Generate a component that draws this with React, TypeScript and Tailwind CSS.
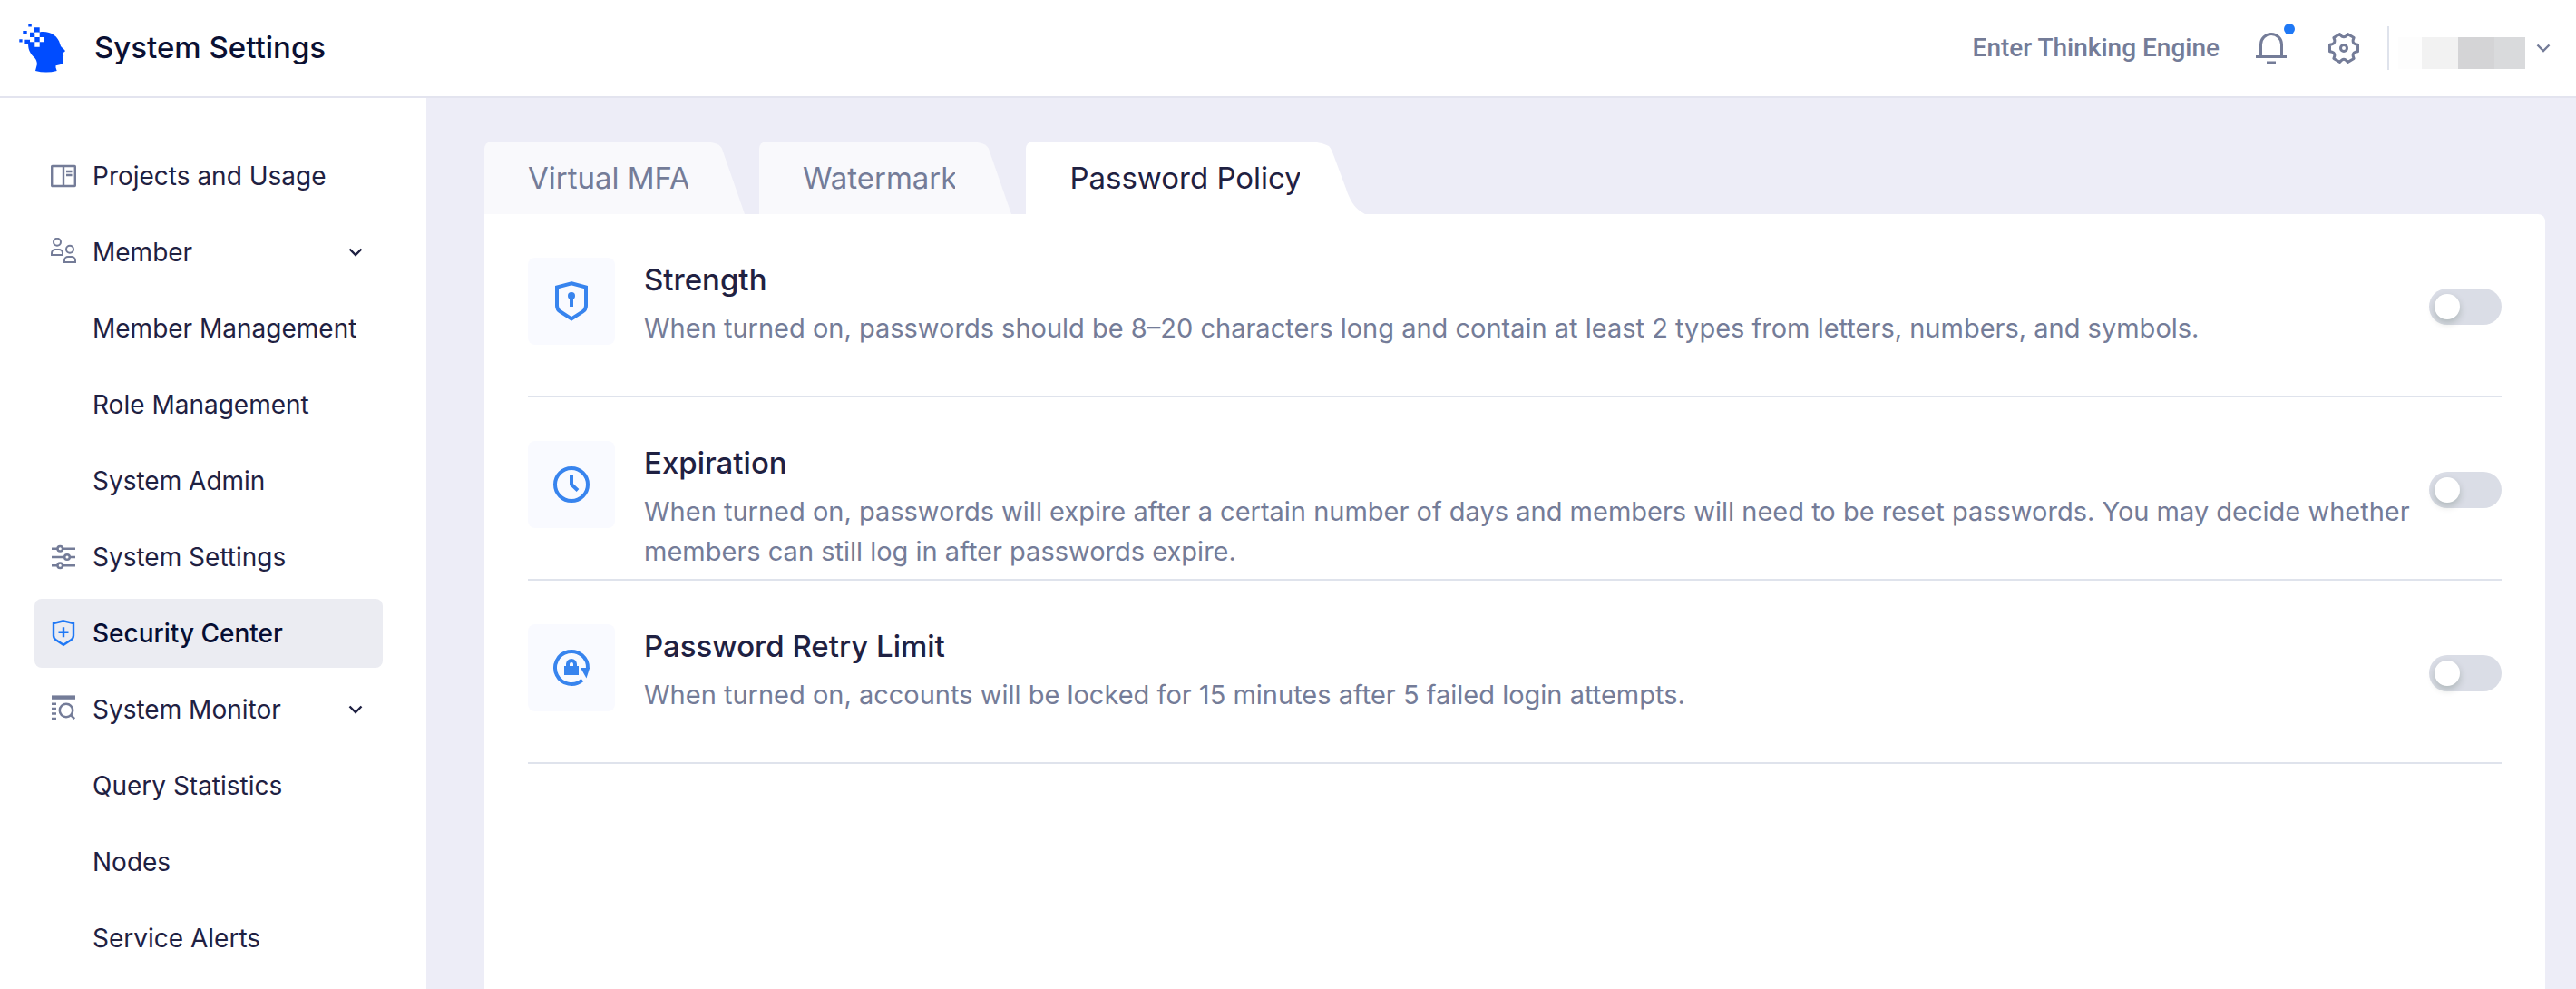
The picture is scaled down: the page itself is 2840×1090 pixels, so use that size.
import { useId, useState } from "react";
import type { ReactNode } from "react";

function NavIcon({ children, className }: { children: ReactNode; className: string }) {
  return (
    <svg viewBox="0 0 28 32" className={`h-8 w-7 shrink-0 ${className}`} fill="none" stroke="currentColor" strokeWidth="2" aria-hidden="true">
      {children}
    </svg>
  );
}

const projectsIcon = (
  <>
    <rect x="1.2" y="5" width="25.6" height="22" rx="0.5" strokeWidth="2.4" />
    <path d="M14 5v22M17 11h6.5M17 15h6.5" strokeWidth="2.4" />
  </>
);

const memberIcon = (
  <>
    <circle cx="7" cy="4.8" r="4" />
    <path d="M1 19v-2a4 4 0 0 1 4-4h4a4 4 0 0 1 4 4v2z" />
    <circle cx="21" cy="12.8" r="4" />
    <path d="M15 27v-2a4 4 0 0 1 4-4h4a4 4 0 0 1 4 4v2z" />
  </>
);

const slidersIcon = (
  <g strokeWidth="2.5">
    <path d="M1 6.7h6.5M13.5 6.7H27M1 16h14M21 16h6M1 25.3h6.5M13.5 25.3H27" />
    <circle cx="10.3" cy="6.7" r="2.8" />
    <circle cx="18" cy="16" r="2.8" />
    <circle cx="10.3" cy="25.3" r="2.8" />
  </g>
);

const shieldPlusIcon = (
  <g strokeWidth="2.4">
    <path d="M14 2.3 25 5V18.5Q25 21.5 22 23.6L14 28.8 6 23.6Q3 21.5 3 18.5V5z" />
    <path d="M14 9.3v11M8.5 14.8h11" />
  </g>
);

const monitorIcon = (
  <g strokeWidth="2.5">
    <path d="M1 2.6h26" strokeWidth="4.4" />
    <path d="M1 9.7h5M1 15h5M1 20.5h5M1 26h5" />
    <circle cx="17" cy="17" r="7.2" />
    <path d="m22 22 4.2 4.2" />
  </g>
);

type NavItem = { label: string; icon?: ReactNode; expandable?: boolean; active?: boolean };

const navItems: NavItem[] = [
  { label: "Projects and Usage", icon: projectsIcon },
  { label: "Member", icon: memberIcon, expandable: true },
  { label: "Member Management" },
  { label: "Role Management" },
  { label: "System Admin" },
  { label: "System Settings", icon: slidersIcon },
  { label: "Security Center", icon: shieldPlusIcon, active: true },
  { label: "System Monitor", icon: monitorIcon, expandable: true },
  { label: "Query Statistics" },
  { label: "Nodes" },
  { label: "Service Alerts" },
];

function Chevron() {
  return (
    <svg viewBox="0 0 16 16" className="size-4 shrink-0" fill="none" stroke="currentColor" strokeWidth="2.4" aria-hidden="true">
      <path d="m1.500 4.500 6.500 6.500 6.500-6.500" />
    </svg>
  );
}

function NavRow({ item }: { item: NavItem }) {
  const content = (
    <>
      {item.icon ? (
        <NavIcon className={item.active ? "text-[#1f78f5]" : "text-[#747c98]"}>{item.icon}</NavIcon>
      ) : (
        <span className="w-7 shrink-0" />
      )}
      <span className="flex-1 text-left whitespace-nowrap">{item.label}</span>
      {item.expandable && <Chevron />}
    </>
  );
  const base = "flex h-[76px] w-full items-center gap-[18px] rounded-lg pl-[18px] pr-[22px] text-[28px]";
  if (item.expandable) {
    return (
      <button type="button" aria-expanded="true" className={`${base} text-[#1f2142]`}>
        {content}
      </button>
    );
  }
  return (
    <a
      href="#"
      aria-current={item.active ? "page" : undefined}
      className={`${base} ${item.active ? "bg-[#ebecf2] font-medium text-[#060e33]" : "text-[#1f2142]"}`}
    >
      {content}
    </a>
  );
}

function Logo() {
  return (
    <svg viewBox="20 24 54 56" className="h-14 w-[54px] shrink-0" aria-hidden="true">
      <g fill="#004cff">
        <path d="M43.7 34.4C54 32.5 64 38 66.2 47.5Q66.6 50 68.5 51.5L71.6 54.5Q72.5 56 70 56.8L69.6 59 70.2 60.5 69.3 61.8 70 63.4 69.3 65 69.8 67.5Q69.5 69.5 66 70.3L61.5 71.2V73.5L62.7 77Q51 80 39 77L40.8 70Q40.8 65 38 62.5C33 58 30.5 53 31.2 45.3V42L38 40V36z" />
        <path d="M31.3 25.2h3.5v3.4h-3.5zM25.3 33h4.4v4h-4.4zM21.3 42.2h3.3v3.2h-3.3zM38 29.3h5.7v5.4H38zM33 34.7h5.3v5.3H33zM27.4 42.8h5v4.3h-5z" />
      </g>
      <path d="M38.3 34.7h5.4V40h-5.4zM43.7 40H49v5.3h-5.3zM31 40h7.3v2.7H31zM33 40h5.3v5.3H33zM38.3 45.3h5.4v5.4h-5.4z" fill="#fff" />
    </svg>
  );
}

function gearOutline(cx: number, cy: number, r: number, half: number, notch: number) {
  const point = (deg: number, radius: number) => {
    const a = (deg * Math.PI) / 180;
    return `${(cx + radius * Math.cos(a)).toFixed(2)} ${(cy + radius * Math.sin(a)).toFixed(2)}`;
  };
  let d = `M${point(-half, r)}`;
  for (let i = 0; i < 6; i++) {
    const deg = i * 60;
    d += `L${point(deg + half, r)}Q${point(deg + 30, notch)} ${point(deg + 60 - half, r)}`;
  }
  return `${d}Z`;
}

const gearPath = gearOutline(18, 18, 16, 14, 9);

function Header() {
  return (
    <header className="flex h-[108px] items-center border-b-2 border-[#e3e4ef] bg-white pl-5 pr-7">
      <Logo />
      <h1 className="ml-[30px] text-[33px] font-medium text-[#0a1033]">System Settings</h1>
      <div className="ml-auto flex items-center text-[#747c98]">
        <a href="#" className="mr-[38px] font-['Roboto',sans-serif] text-[28px] font-medium">
          Enter Thinking Engine
        </a>
        <button type="button" aria-label="Notifications" className="relative">
          <svg viewBox="0 0 38 38" className="size-[38px]" fill="none" stroke="currentColor" strokeWidth="3" aria-hidden="true">
            <path d="M7.5 28V15a11.5 11.5 0 0 1 23 0v13M2 28.5h34M14 35h10" />
          </svg>
          <span className="absolute -top-2 right-[-7px] size-3 rounded-full bg-[#1f78f5]" />
        </button>
        <button type="button" aria-label="Settings" className="ml-[43px]">
          <svg viewBox="0 0 36 36" className="size-9" fill="none" stroke="currentColor" strokeWidth="3" strokeLinejoin="round" aria-hidden="true">
            <path d={gearPath} />
            <circle cx="18" cy="18" r="3.5" />
          </svg>
        </button>
        <span className="ml-[30px] h-12 w-0.5 bg-[#dfe3ec]" />
        <button type="button" aria-label="Account" className="flex items-center gap-3 pl-2.5">
          <span className="mt-[11px] flex h-[35px]">
            <span className="w-[26px] bg-[#fdfdfd]" />
            <span className="w-10 bg-[#f2f2f2]" />
            <span className="w-10 bg-[#d4d4d6]" />
            <span className="w-[34px] bg-[#d9dadc]" />
          </span>
          <Chevron />
        </button>
      </div>
    </header>
  );
}

function Tab({ label, active = false }: { label: string; active?: boolean }) {
  return (
    <button
      type="button"
      role="tab"
      aria-selected={active}
      className={`flex h-20 text-[33px] ${active ? "text-[#1f2142]" : "text-[#747c98]"}`}
    >
      <span className={`flex h-20 items-center rounded-tl-lg pl-12 pt-0.5 ${active ? "bg-white" : "bg-[#f9f9fc]"}`}>{label}</span>
      {active ? (
        <svg viewBox="0 0 72 80" className="-ml-0.5 h-20 w-[72px] fill-white" aria-hidden="true">
          <path d="M0 0H6C18 0 26 2 32 5C35 8 36 12 38 17L51 52C55 64 60 74 72 80H0Z" />
        </svg>
      ) : (
        <svg viewBox="0 0 62 80" className="-ml-0.5 h-20 w-[62px] fill-[#f9f9fc]" aria-hidden="true">
          <path d="M0 0H8C24 0 34 1 37 8L62 80H0Z" />
        </svg>
      )}
    </button>
  );
}

const keyholeIcon = (
  <>
    <path d="M48 28.3 64 32.6V53Q64 57 60.5 59.3L48 67.4 35.5 59.3Q32 57 32 53V32.6z" />
    <path d="M48 42v12" />
    <circle cx="48" cy="42" r="4" fill="currentColor" stroke="none" />
  </>
);

const clockIcon = (
  <>
    <circle cx="48" cy="48" r="18" />
    <path d="M48 38v10l7 6.5" />
  </>
);

const retryIcon = (
  <>
    <path d="M60 61.4A18 18 0 1 1 66 49" />
    <path d="M44 47v-3a4 4 0 0 1 8 0v3" />
    <path d="M40 46h16v10H40zM58 48h10.2L64.5 59.5z" fill="currentColor" stroke="none" />
  </>
);

type Policy = { title: string; description: string; icon: ReactNode };

const policies: Policy[] = [
  {
    title: "Strength",
    description:
      "When turned on, passwords should be 8–20 characters long and contain at least 2 types from letters, numbers, and symbols.",
    icon: keyholeIcon,
  },
  {
    title: "Expiration",
    description:
      "When turned on, passwords will expire after a certain number of days and members will need to be reset passwords. You may decide whether members can still log in after passwords expire.",
    icon: clockIcon,
  },
  {
    title: "Password Retry Limit",
    description: "When turned on, accounts will be locked for 15 minutes after 5 failed login attempts.",
    icon: retryIcon,
  },
];

function PolicyRow({ policy }: { policy: Policy }) {
  const [on, setOn] = useState(false);
  const id = useId();
  return (
    <section className="flex min-h-[202px] items-start border-b-2 border-[#dfe3ec] pt-12 pb-1">
      <svg
        viewBox="0 0 96 96"
        className="size-24 shrink-0 rounded-lg bg-[#f9faff] text-[#3884ee]"
        fill="none"
        stroke="currentColor"
        strokeWidth="4"
        aria-hidden="true"
      >
        {policy.icon}
      </svg>
      <div className="ml-8 flex-1">
        <h2 className="text-[33px] leading-[48px] font-medium text-[#1f2142]">
          <label htmlFor={id}>{policy.title}</label>
        </h2>
        <p className="mt-2 text-[29px] leading-[44px] text-[#747c98]">{policy.description}</p>
      </div>
      <input
        id={id}
        type="checkbox"
        role="switch"
        checked={on}
        onChange={(e) => setOn(e.target.checked)}
        className="mt-[34px] ml-4 flex h-10 w-20 shrink-0 cursor-pointer appearance-none items-center rounded-full bg-[#dadde6] px-1.5 before:block before:size-7 before:rounded-full before:bg-white before:shadow-[0_4px_8px_rgba(0,35,11,0.2)] before:content-[''] checked:justify-end checked:bg-[#1f78f5]"
      />
    </section>
  );
}

export default function App() {
  return (
    <div className="flex min-h-screen flex-col bg-[#ededf7] font-['Inter','Liberation_Sans',sans-serif]">
      <Header />
      <div className="flex flex-1">
        <nav aria-label="System settings" className="flex w-[470px] shrink-0 flex-col gap-2 bg-white pt-12 pr-12 pl-[38px]">
          {navItems.map((item) => (
            <NavRow key={item.label} item={item} />
          ))}
        </nav>
        <main className="flex flex-1 flex-col pt-12 pr-[34px] pl-16">
          <div role="tablist" className="flex gap-4">
            <Tab label="Virtual MFA" />
            <Tab label="Watermark" />
            <Tab label="Password Policy" active />
          </div>
          <div role="tabpanel" aria-label="Password Policy" className="flex-1 rounded-tr-lg bg-white px-12">
            {policies.map((policy) => (
              <PolicyRow key={policy.title} policy={policy} />
            ))}
          </div>
        </main>
      </div>
    </div>
  );
}
